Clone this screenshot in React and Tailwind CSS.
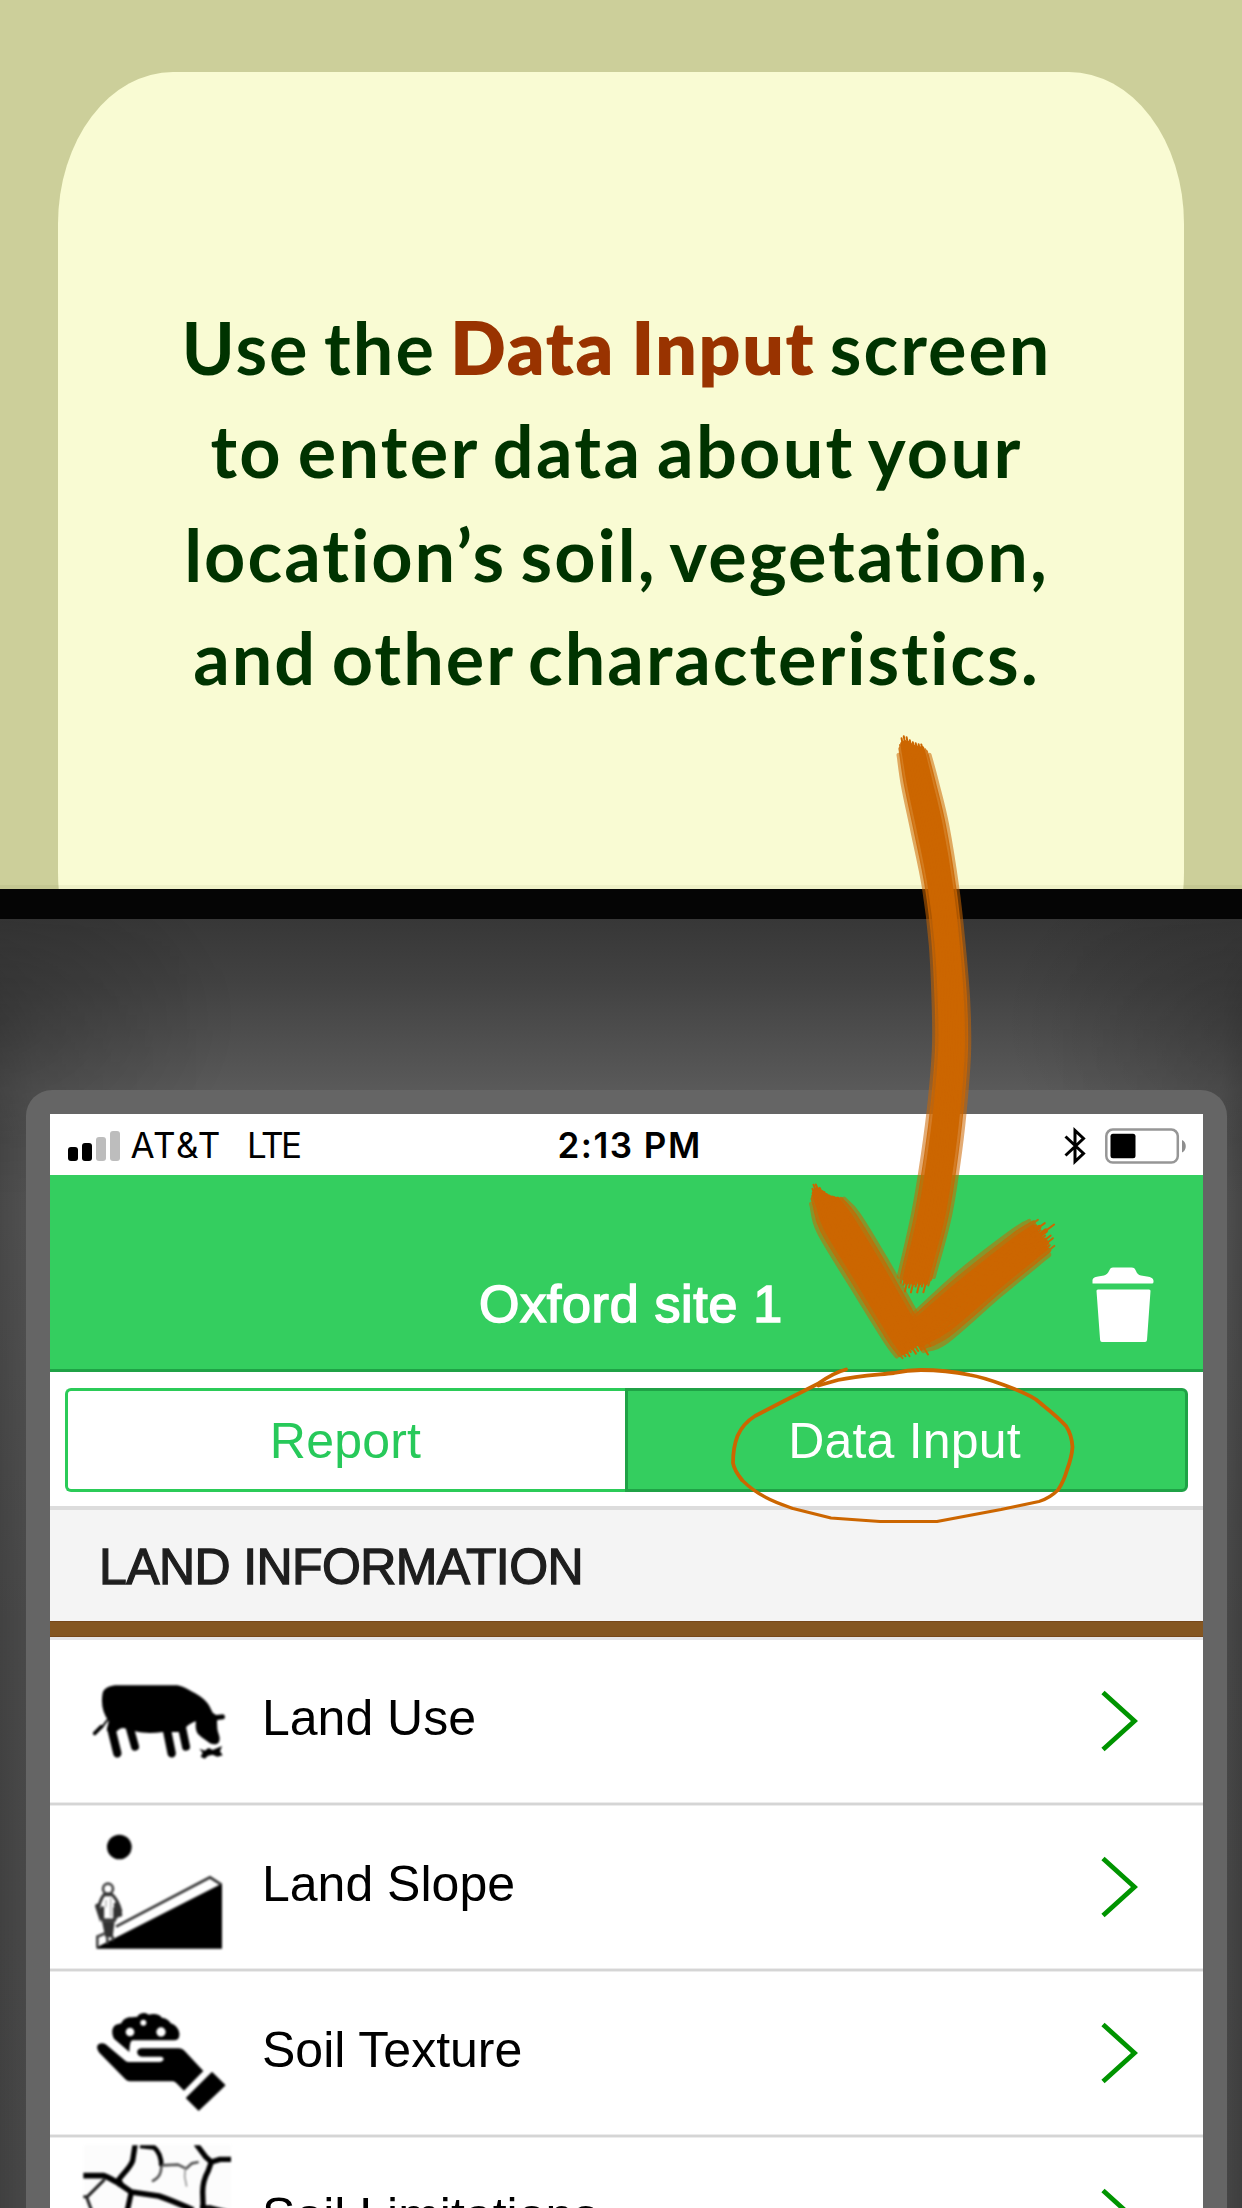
const ORANGE = "#cc6600";

/* Smooth open curve through a list of points. */
function curve(pts) {
  let d = `M${pts[0][0].toFixed(1)} ${pts[0][1].toFixed(1)}`;
  for (let i = 0; i < pts.length - 1; i++) {
    const p0 = pts[i - 1] || pts[i];
    const p1 = pts[i];
    const p2 = pts[i + 1];
    const p3 = pts[i + 2] || p2;
    const c = [
      p1[0] + (p2[0] - p0[0]) / 6, p1[1] + (p2[1] - p0[1]) / 6,
      p2[0] - (p3[0] - p1[0]) / 6, p2[1] - (p3[1] - p1[1]) / 6,
      p2[0], p2[1],
    ];
    d += "C" + c.map((v) => v.toFixed(1)).join(" ");
  }
  return d;
}

function extend(from, to, amount) {
  const dx = to[0] - from[0];
  const dy = to[1] - from[1];
  const len = Math.hypot(dx, dy) || 1;
  return [to[0] + (dx / len) * amount, to[1] + (dy / len) * amount];
}

/* A brush stroke: bristles laid side by side between two edges,
   each one ending in a thin hair. */
function Brush({ left, right, head, tail, width }) {
  const n = head.length;
  return head.map((h, i) => {
    const t = i / (n - 1);
    const mid = left.map((p, k) => [
      p[0] + (right[k][0] - p[0]) * t,
      p[1] + (right[k][1] - p[1]) * t,
    ]);
    const last = mid.length - 1;
    const ends = (a, b) => curve([extend(mid[1], mid[0], a), ...mid, extend(mid[last - 1], mid[last], b)]);
    const edge = Math.min(i, n - 1 - i);
    const opacity = edge === 0 ? 0.55 : edge === 1 ? 0.85 : 1;
    return (
      <g key={i} fill="none" stroke={ORANGE} strokeLinecap="round" opacity={opacity}>
        <path d={ends(h * 0.75, tail[i] * 0.6)} strokeWidth={width} />
        <path d={ends(h + 1, tail[i] + 2)} strokeWidth="2" />
      </g>
    );
  });
}

const shaft = {
  left: [[899, 757], [903, 785], [913, 833], [924, 887], [931, 945], [934, 1010], [934, 1050], [930, 1100], [923, 1155], [913, 1215], [900, 1272]],
  right: [[930, 757], [937, 783], [947, 825], [957, 887], [963, 940], [968, 1000], [969, 1048], [966, 1095], [960, 1151], [950, 1215], [935, 1272]],
  head: [0, 11, 18, 20, 19, 16, 14, 13, 12, 12, 7, 0],
  tail: [2, 9, 11, 18, 14, 19, 13, 19, 13, 19, 12, 3],
};
const armLeft = {
  left: [[812, 1206], [819, 1232], [851, 1285], [885, 1340], [896, 1355]],
  right: [[845, 1200], [858, 1214], [885, 1258], [913, 1308], [923, 1326]],
  head: [0, 9, 16, 20, 20, 16, 11, 7, 5, 3, 1, 0],
  tail: [0, 5, 6, 9, 7, 12, 12, 14, 22, 12, 18, 4],
};
const armRight = {
  left: [[914, 1314], [960, 1272], [1013, 1231], [1028, 1222]],
  right: [[925, 1350], [947, 1341], [1000, 1295], [1045, 1258]],
  head: [0, 0, 0, 0, 0, 0, 0, 0, 0, 0, 0, 0],
  tail: [0, 8, 4, 13, 6, 21, 8, 13, 14, 8, 12, 4],
};

function Annotation() {
  return (
    <svg className="pointer-events-none absolute inset-0 h-[2208px] w-[1242px]" viewBox="0 0 1242 2208">
      <g className="blur-[0.600px]">
        <Brush {...shaft} width={4.4} />
        <Brush {...armLeft} width={4.8} />
        <Brush {...armRight} width={4.8} />
      </g>
      <g fill="none" stroke={ORANGE} strokeLinecap="round" strokeLinejoin="round">
        <path
          strokeWidth="3.8"
          d="M846 1369.500C836 1372 826 1378 817.500 1384L783 1401.500L755 1416C747 1421 741 1428 737.500 1436C734 1445 733 1455 733 1463C734 1469 738 1475 742 1480"
        />
        <path
          strokeWidth="3.2"
          d="M742 1480C749 1487 757 1493 766 1497.500C774 1502 783 1505 793 1508.500L831 1518L880 1521.500H937L1001 1509.500L1039 1501.500C1047 1499 1053 1495 1058 1490"
        />
        <path
          strokeWidth="3.8"
          d="M1058 1490C1062 1484 1065 1477 1067 1470C1070 1462 1072 1454 1072.500 1447C1072 1439 1070 1432 1066 1426C1057 1416 1046 1408 1036 1399.500C1026 1393 1015 1389 1004 1385C993 1381 982 1377 970 1375C953 1371.500 937 1370 921 1370C912 1370 903 1371 894 1373C875 1375 856 1376 838 1380L818.500 1385.500"
        />
      </g>
    </svg>
  );
}

function SignalBars() {
  return (
    <div className="flex h-[31px] items-end gap-[4.500px]">
      <div className="h-3.5 w-[9.500px] rounded-[3px] bg-black" />
      <div className="h-[18.500px] w-[9.500px] rounded-[3px] bg-black" />
      <div className="h-[24.500px] w-[9.500px] rounded-[3px] bg-[#bdbdbd]" />
      <div className="h-[30.500px] w-[9.500px] rounded-[3px] bg-[#bdbdbd]" />
    </div>
  );
}

function Bluetooth() {
  return (
    <svg className="h-[38px] w-[22px]" viewBox="0 0 22 38">
      <path d="M1.500 9.500L19.500 26.500L11 34.500V3.500L19.500 11.500L1.500 28.500" fill="none" stroke="#000" strokeWidth="3" />
    </svg>
  );
}

function Battery() {
  return (
    <svg className="h-[36px] w-[83px]" viewBox="0 0 83 36">
      <rect x="1.300" y="1.600" width="71.500" height="33" rx="6.500" fill="none" stroke="#969696" strokeWidth="2.500" />
      <rect x="5.500" y="5.800" width="25" height="24.500" rx="2.500" fill="#000" />
      <path d="M77 12C82 14 82 22.500 77 24.500Z" fill="#8e8e8e" />
    </svg>
  );
}

function Trash() {
  return (
    <svg className="h-[76px] w-[62px]" viewBox="0 0 62 76">
      <path
        fill="#fff"
        d="M.5 16.500V13.500C.5 11 3 10 6 9.500L12 8.500C14.500 8 16 6 17 4C18 1.500 19 .5 21 .5H39.500C42 .5 43 1.500 44 4C45 6.500 46.500 8.200 49 8.600L55 9.500C59 10 61.500 11.500 61.500 14V15Q61.500 16.500 60 16.500Z"
      />
      <path fill="#fff" d="M4.500 24Q4.300 22.500 6 22.500H57Q58.700 22.500 58.500 24L55 73Q54.800 75 53 75H10Q8.300 75 8.100 73Z" />
    </svg>
  );
}

function Chevron() {
  return (
    <svg className="h-[62px] w-[38px]" viewBox="0 0 38 62">
      <path d="M3 2.500L34.500 31L3 59.500" fill="none" stroke="#009400" strokeWidth="4.800" />
    </svg>
  );
}

function Cow() {
  return (
    <g stroke="#000" strokeLinecap="round" strokeLinejoin="round">
      <path
        stroke="none"
        d="M68 158C74 142 92 136 112 136H292C308 138 322 148 338 156C358 166 378 180 388 198L398 218L408 225L430 223C437 228 436 236 430 238L412 240C410 248 412 256 412 266C413 278 422 290 418 302C416 314 402 315 390 310C380 302 366 294 358 286C346 276 346 258 348 244C336 248 326 254 318 262L310 276H248C220 280 190 280 166 274L130 264C122 264 116 268 108 276L80 272L86 244C68 220 62 190 68 158Z"
      />
      <path d="M82 240L66 262" strokeWidth="6" fill="none" />
      <path d="M64 260L44 280" strokeWidth="11" fill="none" />
      <path d="M94 266L112 340" strokeWidth="25" fill="none" />
      <path d="M150 266L165 320" strokeWidth="24" fill="none" />
      <path d="M260 266L275 340" strokeWidth="25" fill="none" />
      <path d="M306 262L318 320" strokeWidth="24" fill="none" />
      <path stroke="none" d="M358 326L374 332L386 324L398 330L426 318L420 334L428 346L412 350L398 344L384 347L374 356L362 350L368 338Z" />
    </g>
  );
}

function Slope() {
  return (
    <g transform="translate(0 42)" fill="none" stroke="#222">
      <circle cx="118" cy="81" r="37" fill="#000" stroke="none" />
      <path d="M50 384L424 194V384Z" fill="#000" stroke="#000" strokeWidth="4" />
      <path d="M108 320L390 172L424 194" strokeWidth="8" stroke="#333" />
      <circle cx="84" cy="206" r="15" strokeWidth="8" stroke="#444" />
      <path d="M72 224C62 236 58 250 54 270L60 290L68 260V300H104V262L112 288L122 272C116 250 110 236 96 224Z" strokeWidth="9" stroke="#333" />
      <path d="M52 258L62 286M108 254L120 284" strokeWidth="14" stroke="#333" strokeLinecap="round" />
      <path d="M78 240V262M92 234V290" strokeWidth="4" stroke="#aaa" />
      <path d="M66 304H104L98 352H76Z" fill="#333" stroke="none" />
      <path d="M76 340L52 350V382M98 348V362M82 352V372" strokeWidth="8" stroke="#444" />
    </g>
  );
}

function HandSoil() {
  return (
    <g transform="translate(0 54)" fill="#000" strokeLinejoin="round">
      <path d="M148 186L102 146C94 130 94 112 108 104L124 100C128 88 142 80 156 82L172 80C178 68 196 66 206 74C220 70 240 72 246 84C258 84 268 92 272 100C290 106 300 122 298 136C298 146 292 151 282 151H158C150 154 150 162 148 186Z" />
      <circle cx="150" cy="126" r="13" fill="#fff" />
      <circle cx="190" cy="98" r="9" fill="#fff" />
      <circle cx="243" cy="126" r="14" fill="#fff" />
      <path d="M52 176C48 164 62 156 76 162L136 212C140 215 144 216 150 216H240C254 214 254 201 242 200H186C168 200 166 176 184 175H296C304 175 308 178 314 183L370 243L312 302L288 278C284 275 280 274 274 274H150C144 274 140 272 136 268L58 188C55 184 53 180 52 176Z" />
      <path d="M396 248L434 286L356 360L320 324Z" stroke="#000" strokeWidth="4" />
    </g>
  );
}

function Cracks() {
  return (
    <g fill="none" stroke="#000" strokeLinejoin="round">
      <svg x="10" y="22" width="443" height="464" viewBox="10 466 443 464">
        <rect x="10" y="466" width="443" height="464" fill="#fcfcfc" stroke="none" />
        <path d="M166 460L158 512C150 536 126 552 112 576" strokeWidth="16" />
        <path d="M0 557H72C84 560 96 570 112 577L154 606L236 618C264 626 296 642 340 660" strokeWidth="17" />
        <path d="M110 566L122 580L120 590" strokeWidth="16" />
        <path d="M154 606L140 670" strokeWidth="16" />
        <path d="M74 568L20 622L38 670M8 620H22" strokeWidth="9" stroke="#222" />
        <path d="M180 468L222 472C236 484 244 500 244 528" strokeWidth="14" />
        <path d="M244 528C244 548 240 562 216 574" strokeWidth="8" stroke="#555" />
        <path d="M244 526L294 524L318 536L336 520L356 516" strokeWidth="8" stroke="#555" />
        <path d="M316 534L314 560L320 590" strokeWidth="5" stroke="#999" />
        <path d="M348 462L378 502L394 516" strokeWidth="16" />
        <path d="M460 508H420L394 516L384 544C372 566 368 584 368 606L370 670" strokeWidth="16" />
        <path d="M360 652L392 652L440 664" strokeWidth="12" />
      </svg>
    </g>
  );
}

function Row({ icon, label }) {
  return (
    <div className="flex h-[166px] shrink-0 flex-col">
      <div className="flex h-[162px] items-start pl-[30px]">
        <svg className="h-[162px] w-40 blur-[1px]" viewBox="0 0 480 486">{icon}</svg>
        <div className="mt-[52.700px] ml-[22px] flex-1 text-[50px] leading-[50px] whitespace-nowrap text-black">{label}</div>
        <div className="mt-[50px] mr-[65px]">
          <Chevron />
        </div>
      </div>
      <div className="h-1 border-y border-[#ececec] bg-[#d5d5d5]" />
    </div>
  );
}

export default function App() {
  return (
    <div className="relative flex h-[2208px] w-[1242px] flex-col overflow-hidden bg-[#383838] font-['Liberation_Sans',sans-serif]">
      <div className="relative h-[889px] shrink-0 overflow-hidden bg-[#cccf9a] px-[58px] pt-[71.500px]">
        <div className="h-[952px] rounded-[115px/152px] bg-[#f9fbd3] pt-[224px] pr-[9px] text-center font-['Lato',sans-serif] text-[72px] leading-[103.600px] font-bold tracking-[2px] text-[#003300] [word-spacing:-5px]">
          Use the <span className="text-[73px] leading-none font-extrabold tracking-[1.700px] [word-spacing:-2px] text-[#993300]">Data Input</span> screen
          <br />
          <span className="tracking-[2.300px] [word-spacing:-5px]">to enter data about your</span>
          <br />
          location’s soil, vegetation,
          <br />
          and other characteristics.
        </div>
        <div className="absolute inset-x-0 bottom-0 h-1 bg-[#333300]/5" />
      </div>

      <div className="h-[29.500px] shrink-0 bg-[#050505]" />

      <div className="relative h-[1289.500px] shrink-0 bg-[linear-gradient(180deg,#373737_0px,#414141_60px,#5a5a5a_172px,#5c5c5c_300px,#545454_700px,#525252_1290px)] px-[26px] pt-[171.500px]">
        <div className="absolute inset-0 bg-[linear-gradient(90deg,rgba(0,0,0,0.210)_0px,rgba(0,0,0,0.100)_34px,rgba(0,0,0,0.050)_90px,transparent_200px,transparent_1060px,rgba(0,0,0,0.060)_1160px,rgba(0,0,0,0.120)_1222px,rgba(0,0,0,0.240)_1242px)] [mask-image:linear-gradient(180deg,transparent_0px,black_220px)]" />
        <div className="absolute inset-0 bg-[radial-gradient(240px_180px_at_0px_100px,rgba(0,0,0,0.160),transparent),radial-gradient(240px_180px_at_1242px_100px,rgba(0,0,0,0.160),transparent)]" />
        <div className="relative h-[1118px] w-[1201px] rounded-t-[26px] bg-[#656565] px-6 pt-6">
          <div className="flex h-[1094px] w-[1153px] flex-col overflow-hidden bg-white">
            <div className="flex h-[61px] shrink-0 items-center pt-0.5 pl-[18px] font-['Inter',sans-serif] text-[35px] leading-none text-black">
              <SignalBars />
              <div className="ml-[11px] w-[116.500px] tracking-[1.400px]">AT&amp;T</div>
              <div className="w-[310.500px] tracking-[-2.500px]">LTE</div>
              <div className="flex-1 font-semibold tracking-[1.500px] whitespace-nowrap">2:13 PM</div>
              <Bluetooth />
              <div className="mr-[15px] ml-[19px]">
                <Battery />
              </div>
            </div>

            <div className="flex h-[196.500px] shrink-0 items-start border-b-[3px] border-[#1fa246] bg-[#34ce5f] pl-[429px]">
              <div className="mt-[103px] flex-1 text-[52px] leading-[52px] tracking-[0.700px] text-white [-webkit-text-stroke:1.600px_white]">Oxford site 1</div>
              <div className="mt-[91.500px] mr-[49px]">
                <Trash />
              </div>
            </div>

            <div className="h-[134.500px] shrink-0 px-[15px] pt-[16px]">
              <div className="flex h-[104px] text-center text-[50px] leading-[98px] tracking-[0.200px]">
                <div className="w-[560px] rounded-l-[6px] border-[3px] border-r-0 border-[#2bcb58] bg-white pt-px pr-0.5 text-[#27c95a]">Report</div>
                <div className="w-[563px] rounded-r-[6px] border-[3px] border-[#1fa246] bg-[#34ce5f] pt-px pr-1 text-white">Data Input</div>
              </div>
            </div>

            <div className="h-[115px] shrink-0 border-t-[4px] border-[#dcdcdc] bg-[#f4f4f4] pt-[31.500px] pl-[49px] text-[50px] leading-[50px] tracking-[-0.600px] text-[#1e1e1e] [-webkit-text-stroke:1.300px_#1e1e1e]">
              LAND INFORMATION
            </div>
            <div className="h-4 shrink-0 border-y border-[#77481a] bg-[#845621]" />
            <div className="h-[3px] shrink-0 bg-[#e6e6e8]" />

            <Row icon={<Cow />} label="Land Use" />
            <Row icon={<Slope />} label="Land Slope" />
            <Row icon={<HandSoil />} label="Soil Texture" />
            <Row icon={<Cracks />} label="Soil Limitations" />
          </div>
        </div>
      </div>

      <Annotation />
    </div>
  );
}
